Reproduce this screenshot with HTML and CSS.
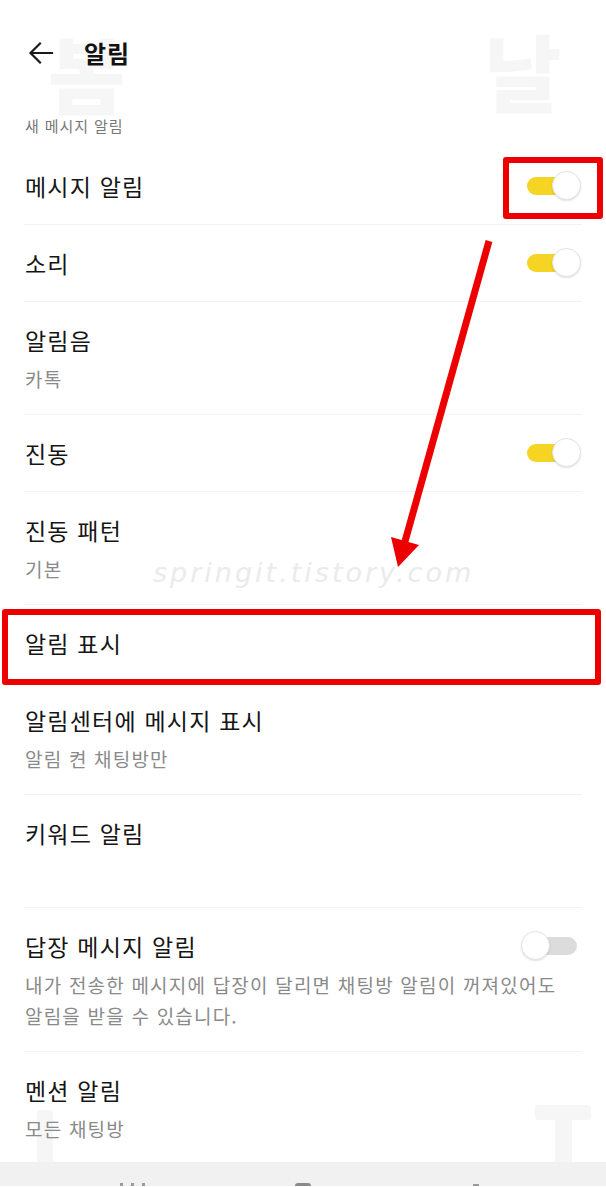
FILE: index.html
```html
<!DOCTYPE html>
<html lang="ko">
<head>
<meta charset="utf-8">
<title>알림</title>
<link rel="stylesheet" href="styles.css">
</head>
<body>
<div class="page">
  <div class="wm wm-bom">봄</div>
  <div class="wm wm-nal">날</div>
  <div class="wm-bar wm-left"></div>
  <div class="wm-bar wm-right-h"></div>
  <div class="wm-bar wm-right-v"></div>

  <header class="header">
    <svg class="back" width="26" height="24" viewBox="0 0 26 24" aria-hidden="true">
      <path d="M24 12H3M12 2.5L2.5 12L12 21.5" fill="none" stroke="#1a1a1a" stroke-width="2.2" stroke-linecap="square"/>
    </svg>
    <h1 class="title">알림</h1>
  </header>

  <div class="section-label">새 메시지 알림</div>

  <div class="list">
    <div class="row">
      <div class="head"><div class="row-title">메시지 알림</div>
      <div class="switch on"><span class="track"></span><span class="knob"></span></div></div>
    </div>
    <div class="row">
      <div class="head"><div class="row-title">소리</div>
      <div class="switch on"><span class="track"></span><span class="knob"></span></div></div>
    </div>
    <div class="row tall">
      <div class="head"><div class="row-title">알림음</div></div>
      <div class="row-sub">카톡</div>
    </div>
    <div class="row">
      <div class="head"><div class="row-title">진동</div>
      <div class="switch on"><span class="track"></span><span class="knob"></span></div></div>
    </div>
    <div class="row tall">
      <div class="head"><div class="row-title">진동 패턴</div></div>
      <div class="row-sub">기본</div>
    </div>
    <div class="row">
      <div class="head"><div class="row-title">알림 표시</div></div>
    </div>
    <div class="row tall">
      <div class="head"><div class="row-title">알림센터에 메시지 표시</div></div>
      <div class="row-sub">알림 켠 채팅방만</div>
    </div>
    <div class="row tall">
      <div class="head"><div class="row-title">키워드 알림</div></div>
      <div class="row-sub">&nbsp;</div>
    </div>
    <div class="row tall">
      <div class="head"><div class="row-title">답장 메시지 알림</div>
      <div class="switch off"><span class="track"></span><span class="knob"></span></div></div>
      <div class="row-sub">내가 전송한 메시지에 답장이 달리면 채팅방 알림이 꺼져있어도 알림을 받을 수 있습니다.</div>
    </div>
    <div class="row tall last">
      <div class="head"><div class="row-title">멘션 알림</div></div>
      <div class="row-sub">모든 채팅방</div>
    </div>
  </div>

  <nav class="navbar">
    <span class="nav-ico recent"><i></i><i></i><i></i></span>
    <span class="nav-ico home"></span>
    <span class="nav-ico backkey"></span>
  </nav>

  <div class="watermark-text">springit.tistory.com</div>

  <div class="mark mark-toggle"></div>
  <div class="mark mark-row"></div>
  <svg class="mark-arrow" width="606" height="1187" viewBox="0 0 606 1187" aria-hidden="true">
    <line x1="489" y1="241" x2="404" y2="545" stroke="#ec0000" stroke-width="7"/>
    <polygon points="398,567 419,545 391,537" fill="#ec0000"/>
  </svg>
</div>
</body>
</html>
```
FILE: styles.css
```css
* { box-sizing: border-box; }
html, body { margin: 0; padding: 0; background: #fff; }
body {
  font-family: "Noto Sans CJK KR", "Noto Sans", sans-serif;
  color: #1a1a1a;
}
.page {
  position: relative;
  width: 606px;
  height: 1187px;
  overflow: hidden;
  background: #fff;
}

/* faint watermark glyphs */
.wm {
  position: absolute;
  font-family: "Noto Sans CJK KR", sans-serif;
  font-weight: 900;
  font-size: 84px;
  line-height: 1;
  color: #f6f6f6;
  z-index: 0;
}
.wm-bom { left: 48px; top: 30px; }
.wm-nal { left: 484px; top: 28px; }
.wm-bar { position: absolute; background: #f6f6f6; z-index: 0; border-radius: 4px; }
.wm-left { left: 37px; top: 1110px; width: 16px; height: 58px; }
.wm-right-h { left: 535px; top: 1105px; width: 56px; height: 15px; }
.wm-right-v { left: 555px; top: 1105px; width: 17px; height: 64px; }

.header {
  position: relative;
  z-index: 1;
  height: 106px;
  display: flex;
  align-items: center;
  padding-left: 28px;
}
.back { display: block; }
.title {
  margin: 0 0 0 30px;
  font-size: 24px;
  font-weight: 700;
  line-height: 30px;
  letter-spacing: 1px;
  color: #111;
}

.section-label {
  position: relative;
  z-index: 1;
  height: 42px;
  padding: 10px 0 0 25px;
  font-size: 15px;
  line-height: 20px;
  letter-spacing: 0.9px;
  color: #777;
}

.list { position: relative; z-index: 1; }
.row {
  margin: 0 24px;
  padding: 23px 1px 23px 1px;
  border-bottom: 1px solid #f2f2f2;
}
.row.tall { padding-bottom: 20px; }
.row.last { border-bottom: none; padding-bottom: 18px; }
.head {
  display: flex;
  align-items: center;
  justify-content: space-between;
  height: 30px;
}
.row-title {
  font-size: 23px;
  line-height: 30px;
  letter-spacing: 1.2px;
  color: #151515;
}
.row-sub {
  margin-top: 8px;
  font-size: 19px;
  line-height: 31px;
  letter-spacing: 1.2px;
  color: #8a8a8a;
}

.switch {
  position: relative;
  width: 56px;
  height: 30px;
  flex: none;
}
.switch .track {
  position: absolute;
  top: 6px;
  height: 18px;
  border-radius: 9px;
}
.switch .knob {
  position: absolute;
  top: 0;
  width: 29px;
  height: 29px;
  border-radius: 50%;
  background: #fff;
  border: 1px solid #e2e2e2;
  box-shadow: 0 1px 2px rgba(0,0,0,0.12);
}
.switch.on .track { left: 2px; width: 40px; background: #f5d424; }
.switch.on .knob { right: 0; }
.switch.off { margin-right: 4px; }
.switch.off .track { left: 12px; right: 0; background: #dcdcdc; }
.switch.off .knob { left: 0; }

.navbar {
  position: relative;
  z-index: 1;
  height: 24px;
  background: #f1f1f1;
  display: flex;
  align-items: flex-end;
}
.nav-ico { display: block; height: 3px; }
.recent { margin-left: 120px; width: 25px; display: flex; justify-content: space-between; }
.recent i { display: block; width: 3px; height: 3px; background: #9a9a9a; }
.home { margin-left: 150px; width: 16px; background: #8a8a8a; border-radius: 3px 3px 0 0; }
.backkey { margin-left: 162px; width: 6px; height: 2px; background: #9a9a9a; }

.watermark-text {
  position: absolute;
  z-index: 2;
  left: 153px;
  top: 555px;
  font-family: "DejaVu Sans", sans-serif;
  font-weight: 200;
  font-style: italic;
  font-size: 27px;
  letter-spacing: 3px;
  line-height: 36px;
  color: #ebebeb;
}

.mark {
  position: absolute;
  z-index: 3;
  border: 6px solid #ec0000;
  border-radius: 3px;
}
.mark-toggle { left: 503px; top: 157px; width: 100px; height: 62px; }
.mark-row { left: 2px; top: 609px; width: 599px; height: 76px; }
.mark-arrow { position: absolute; left: 0; top: 0; z-index: 3; }
```
